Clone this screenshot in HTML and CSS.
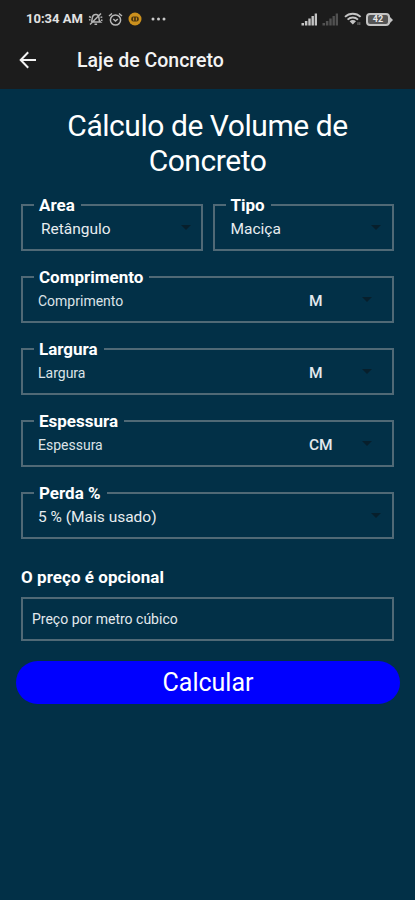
FILE: index.html
```html
<!DOCTYPE html>
<html lang="pt-BR">
<head>
<meta charset="utf-8">
<meta name="viewport" content="width=device-width, initial-scale=1">
<title>Laje de Concreto</title>
<link rel="stylesheet" href="styles.css">
</head>
<body>
<header class="top">
  <div class="status">
    <span class="clock">10:34 AM</span>
    <svg class="mute" width="15" height="14" viewBox="0 0 15 14" fill="none" stroke="#b5b5b5" stroke-width="1.5"><path d="M3.2 9.8c1.2-1 .7-3 1.2-4.600C5 3 6.500 2.200 8.400 2.500c1.500.3 2.500 1.400 2.500 3.200 0 1.900.3 3.300 1.500 4.300H5M6.500 12.200h2.600M2 12.500 13 1.500M1 4.500l2 1M1 8l1.500-.4M12.500 5.500l1.800-.6M13 8l1.500.5"/></svg>
    <svg class="alarm" width="15" height="15" viewBox="0 0 15 15" fill="none" stroke="#b8b8b8" stroke-width="1.500"><circle cx="7.500" cy="8" r="5.100"/><path d="M1 4 4 1.500M14 4l-3-2.500M5.300 7l2.200 2 2.300-2"/></svg>
    <svg class="coin" width="14" height="14" viewBox="0 0 14 14"><circle cx="7" cy="7" r="6.500" fill="#cb901d"/><rect x="3.200" y="4.500" width="7.600" height="5" rx="2.200" fill="#4b3510"/><path d="M5.600 5.500v3M8.400 5.500v3" stroke="#cb901d" stroke-width="1.100"/></svg>
    <svg class="dots" width="15" height="4" viewBox="0 0 15 4" fill="#c8c8c8"><circle cx="2" cy="2" r="1.500"/><circle cx="7.500" cy="2" r="1.500"/><circle cx="13" cy="2" r="1.500"/></svg>
    <svg class="signal" width="17" height="13" viewBox="0 0 17 13" fill="#c4c4c4"><path d="M.5 10h2.500v2.500H.5zM3.900 8h2.500v4.500H3.900zM7.300 5.500h2.400v7H7.300zM10.500 3h2.400v9.500h-2.400zM13.700.5H16v12h-2.300z"/></svg>
    <svg class="signal weak" width="17" height="13" viewBox="0 0 17 13" fill="#515151"><path d="M.5 10h2.500v2.500H.5zM3.900 8h2.500v4.500H3.900zM7.300 5.500h2.400v7H7.300zM10.500 3h2.400v9.500h-2.400zM13.700.5H16v12h-2.300z"/></svg>
    <svg class="wifi" width="18" height="14" viewBox="0 0 18 14" fill="none" stroke="#c4c4c4" stroke-width="1.900"><path d="M1 4.900c4.400-4.200 11.200-4.200 15.600 0M3.600 7.600c3-2.800 7.400-2.800 10.400 0"/><path d="M5.600 9.200c2-1.600 4.400-1.600 6.400 0l-3.200 3.300z" fill="#c4c4c4" stroke="none"/><path d="M14 10.200v2.800M15.800 10.200v2.800" stroke="#777" stroke-width="1"/></svg>
    <span class="battery">42</span>
  </div>
  <div class="bar">
    <svg class="back" width="18" height="18" viewBox="0 0 18 18" fill="none" stroke="#f3f3f3" stroke-width="2"><path d="M17 9H2M9.200 1.300 1.700 9l7.500 7.700"/></svg>
    <h1 class="bar-title">Laje de Concreto</h1>
  </div>
</header>
<main class="content">
  <h2 class="title">Cálculo de Volume de Concreto</h2>
  <div class="pair">
    <div class="field short area"><span class="label">Area</span><span class="value">Retângulo</span><i class="caret"></i></div>
    <div class="field short kind"><span class="label">Tipo</span><span class="value">Maciça</span><i class="caret"></i></div>
  </div>
  <div class="field measure"><span class="label">Comprimento</span><span class="hint">Comprimento</span><span class="unit">M</span><i class="caret"></i></div>
  <div class="field measure"><span class="label">Largura</span><span class="hint">Largura</span><span class="unit">M</span><i class="caret"></i></div>
  <div class="field measure"><span class="label">Espessura</span><span class="hint">Espessura</span><span class="unit">CM</span><i class="caret"></i></div>
  <div class="field loss"><span class="label">Perda %</span><span class="value">5 % (Mais usado)</span><i class="caret"></i></div>
  <p class="note">O preço é opcional</p>
  <div class="price">Preço por metro cúbico</div>
  <button class="submit" type="button">Calcular</button>
</main>
</body>
</html>
```
FILE: styles.css
```css
* { box-sizing: border-box; }
body {
  margin: 0;
  height: 900px;
  overflow: hidden;
  background: #023047;
  color: #fff;
  font-family: Roboto, sans-serif;
}
svg { display: block; flex: none; }
.top { height: 89px; background: #1c1c1c; }
.status { display: flex; align-items: center; height: 38px; padding: 0 22px 0 26px; }
.clock { width: 62px; font-size: 13px; font-weight: 700; line-height: 16px; color: #e2e2e2; white-space: nowrap; }
.alarm { margin-left: 5px; }
.coin { margin-left: 5px; }
.dots { margin-left: 9px; }
.signal { margin-left: auto; }
.signal.weak { margin-left: 4px; }
.wifi { margin-left: 5px; }
.battery {
  position: relative;
  width: 24px;
  height: 13px;
  margin: 0 3px 0 4px;
  border: 2px solid #c4c4c4;
  border-radius: 4px;
  background: #555;
  font-size: 9px;
  font-weight: 700;
  line-height: 9px;
  text-align: center;
  color: #e8e8e8;
}
.battery::after {
  content: "";
  position: absolute;
  right: -5px;
  top: 1px;
  border-left: 4px solid #c4c4c4;
  border-top: 4px solid transparent;
  border-bottom: 4px solid transparent;
}
.bar { display: flex; align-items: center; height: 44px; padding-left: 19px; }
.bar-title { margin: 1px 0 0 40px; font-size: 19.5px; font-weight: 500; line-height: 24px; color: #f3f3f3; }
.content { display: flex; flex-direction: column; padding: 19px 21px 0 21px; }
.title {
  width: 300px;
  margin: 0 auto 26px;
  font-size: 30px;
  font-weight: 400;
  line-height: 35px;
  letter-spacing: -0.45px;
  text-align: center;
}
.pair { display: flex; gap: 10px; margin: 0 0 25px; }
.field {
  position: relative;
  display: flex;
  height: 47px;
  padding: 13px 0 0 15px;
  margin-bottom: 25px;
  border: 2px solid #506976;
  line-height: 20px;
}
.short { width: 182px; margin: 0; }
.area { padding-left: 18px; }
.label {
  position: absolute;
  top: -11px;
  left: 11px;
  padding: 0 6px 0 5px;
  background: #023047;
  font-size: 17px;
  font-weight: 700;
  white-space: nowrap;
}
.value { font-size: 15.5px; color: #e8edf0; white-space: nowrap; }
.kind .value { padding-left: 1px; }
.hint { width: 271px; font-size: 14px; color: #dce3e7; }
.unit { font-size: 15.5px; font-weight: 500; color: #e3e9ed; }
.caret {
  position: absolute;
  top: 19px;
  right: 11px;
  border-top: 5px solid #071f2c;
  border-left: 5px solid transparent;
  border-right: 5px solid transparent;
}
.area .caret { right: 10px; }
.measure .caret { right: 20px; }
.note { margin: 3px 0 10px; font-size: 17px; font-weight: 700; line-height: 20px; letter-spacing: 0.05px; }
.price {
  height: 44px;
  padding-left: 9px;
  border: 2px solid #506976;
  font-size: 14px;
  line-height: 40px;
  color: #e3e9ed;
}
.submit {
  height: 43px;
  margin: 20px -6px 0 -5px;
  padding: 0;
  border: 0;
  border-radius: 22px;
  background: #00f;
  color: #fff;
  font: 400 25px/44px Roboto, sans-serif;
}
```
